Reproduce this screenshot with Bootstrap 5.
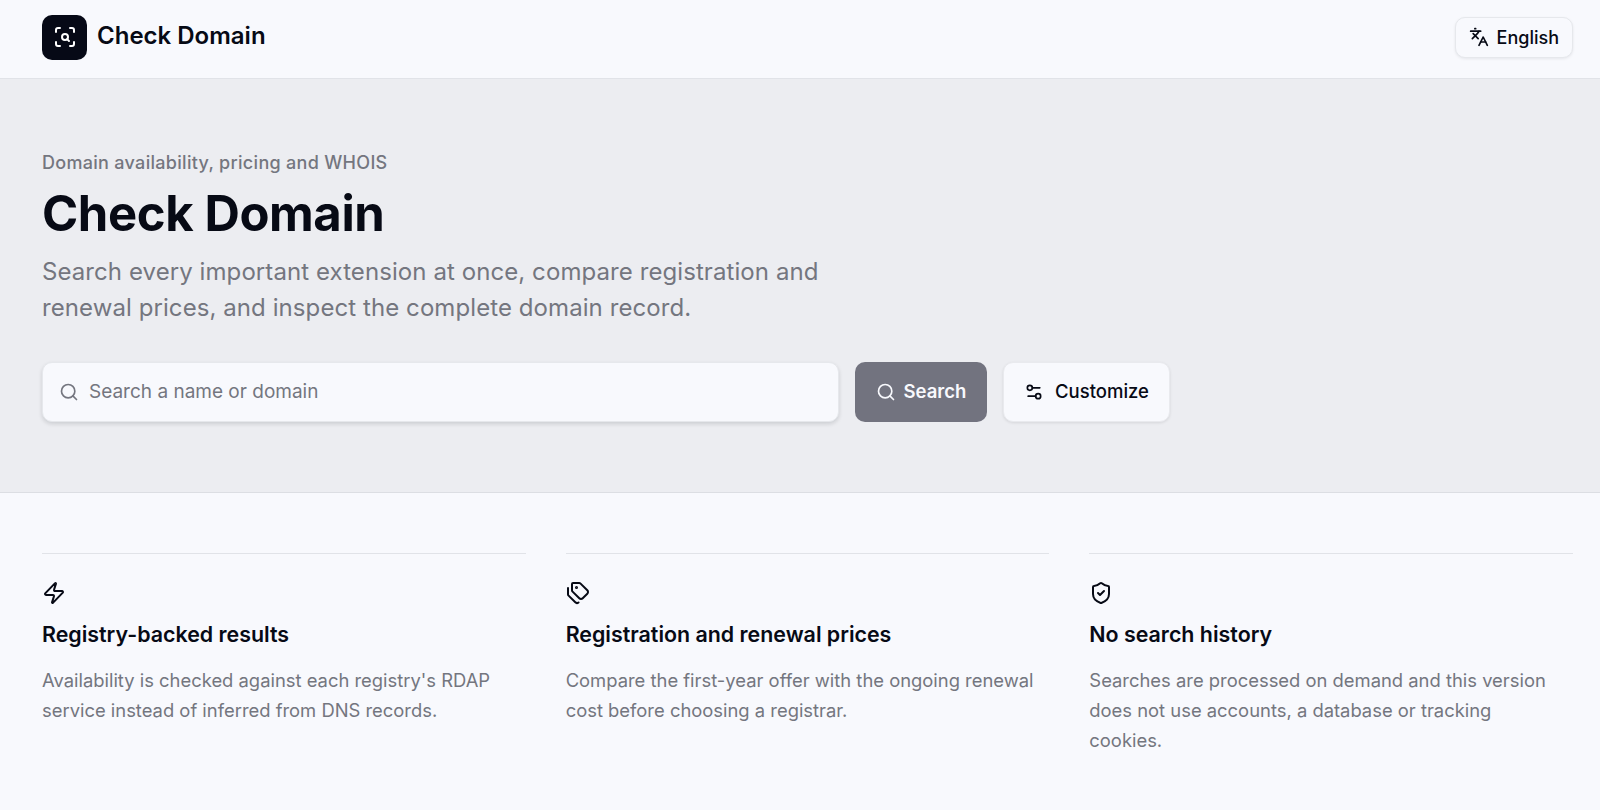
<!DOCTYPE html>
<html lang="en">

<head>
  <meta charset="UTF-8" />
  <title>Check Domain</title>
  <meta name="viewport" content="width=device-width, initial-scale=1.0" />
  <link href="https://cdn.jsdelivr.net/npm/bootstrap@5.3.0/dist/css/bootstrap.min.css" rel="stylesheet" />
  <style>
    body { background: #f8f9fd; color: #070a15; font-family: "Inter", "Liberation Sans", sans-serif; }
    svg.ico { fill: none; stroke: currentColor; stroke-width: 2; stroke-linecap: round; stroke-linejoin: round; flex-shrink: 0; }
    .top-bar { height: 79px; padding: 0 27px 4px 42px; border-bottom: 1px solid #e1e3e8; }
    .logo-box { width: 45px; height: 45px; border-radius: 10px; background: #060916; color: #fff; }
    .brand-name { font-size: 24px; font-weight: 600; margin: 0 0 2px 2px; }
    .lang-btn { height: 41px; padding: 0 13px; font-size: 18px; font-weight: 500; color: #070a15; background: #f8f9fd; border: 1px solid #e6e8ec; border-radius: 10px; box-shadow: 0 1px 3px rgba(10, 12, 23, .08); }
    .hero { height: 414px; padding: 74px 42px 0; background: #ecedf1; border-bottom: 1px solid #dcdee3; }
    .eyebrow { font-size: 18px; font-weight: 500; letter-spacing: .3px; color: #74767f; line-height: 20px; margin-bottom: 12px; }
    .hero-title { font-size: 49px; font-weight: 700; line-height: 58px; letter-spacing: -.4px; margin-bottom: 11px; }
    .hero-sub { font-size: 24px; letter-spacing: .08px; line-height: 36px; color: #74767f; width: 820px; margin-bottom: 36px; }
    .search-box { width: 797px; height: 60px; padding: 0 16px; background: #f8f9fd; border: 1px solid #e6e8ec; border-radius: 10px; box-shadow: 0 2px 4px rgba(10, 12, 23, .14); color: #74767f; }
    .search-box input { border: 0; outline: 0; background: transparent; flex-grow: 1; font-size: 19px; color: #070a15; }
    .search-box input::placeholder { color: #74767f; opacity: 1; }
    .act-btn { height: 60px; border-radius: 10px; font-size: 18.5px; font-weight: 500; }
    .act-search { width: 132px; background: #72737f; color: #f8f9fd; font-weight: 600; border: 0; }
    .act-custom { width: 167px; background: #f8f9fd; color: #070a15; border: 1px solid #e9eaee; box-shadow: 0 1px 3px rgba(10, 12, 23, .1); gap: 11px; }
    .feature-wrap { padding: 60px 27px 0 42px; column-gap: 40px; }
    .feature { border-top: 1px solid #e1e3e8; padding-top: 27px; }
    .feature-title { font-size: 21.4px; font-weight: 600; line-height: 28px; margin: 15px 0 17px; }
    .feature-text { font-size: 18.4px; line-height: 30px; color: #74767f; margin: 0; }
  </style>
</head>

<body>
  <header class="top-bar d-flex align-items-center justify-content-between">
    <div class="d-flex align-items-center gap-2">
      <span class="logo-box d-flex align-items-center justify-content-center">
        <svg class="ico" width="24" height="24" viewBox="0 0 24 24">
          <path d="M3 7V5a2 2 0 0 1 2-2h2" /><path d="M17 3h2a2 2 0 0 1 2 2v2" /><path d="M21 17v2a2 2 0 0 1-2 2h-2" /><path d="M7 21H5a2 2 0 0 1-2-2v-2" /><circle cx="12" cy="12" r="3" /><path d="m16 16-1.9-1.9" />
        </svg>
      </span>
      <span class="brand-name">Check Domain</span>
    </div>
    <button type="button" class="lang-btn d-flex align-items-center gap-2">
      <svg class="ico" width="20" height="20" viewBox="0 0 24 24">
        <path d="m5 8 6 6" /><path d="m4 14 6-6 2-3" /><path d="M2 5h12" /><path d="M7 2h1" /><path d="m22 22-5-10-5 10" /><path d="M14 18h6" />
      </svg>
      English
    </button>
  </header>

  <section class="hero">
    <div class="eyebrow">Domain availability, pricing and WHOIS</div>
    <h1 class="hero-title">Check Domain</h1>
    <p class="hero-sub">Search every important extension at once, compare registration and<br />renewal prices, and inspect the complete domain record.</p>
    <div class="d-flex gap-3">
      <label class="search-box d-flex align-items-center gap-2 mb-0">
        <svg class="ico" width="20" height="20" viewBox="0 0 24 24"><path d="m21 21-4.34-4.34" /><circle cx="11" cy="11" r="8" /></svg>
        <input type="text" placeholder="Search a name or domain" />
      </label>
      <button type="button" class="act-btn act-search d-flex align-items-center justify-content-center gap-2">
        <svg class="ico" width="20" height="20" viewBox="0 0 24 24"><path d="m21 21-4.34-4.34" /><circle cx="11" cy="11" r="8" /></svg>
        Search
      </button>
      <button type="button" class="act-btn act-custom d-flex align-items-center justify-content-center">
        <svg class="ico" width="20" height="20" viewBox="0 0 24 24"><path d="M14 17H5" /><path d="M19 7h-9" /><circle cx="17" cy="17" r="3" /><circle cx="7" cy="7" r="3" /></svg>
        Customize
      </button>
    </div>
  </section>

  <section class="feature-wrap d-grid" style="grid-template-columns: repeat(3, 1fr);">
    <div class="feature">
      <svg class="ico d-block" width="24" height="24" viewBox="0 0 24 24"><path d="M4 14a1 1 0 0 1-.78-1.63l9.9-10.2a.5.5 0 0 1 .86.46l-1.92 6.02A1 1 0 0 0 13 10h7a1 1 0 0 1 .78 1.63l-9.9 10.2a.5.5 0 0 1-.86-.46l1.92-6.02A1 1 0 0 0 11 14z" /></svg>
      <h2 class="feature-title">Registry-backed results</h2>
      <p class="feature-text">Availability is checked against each registry's RDAP<br />service instead of inferred from DNS records.</p>
    </div>
    <div class="feature">
      <svg class="ico d-block" width="24" height="24" viewBox="0 0 24 24"><path d="M13.172 2a2 2 0 0 1 1.414.586l6.71 6.71a2.4 2.4 0 0 1 0 3.408l-4.592 4.592a2.4 2.4 0 0 1-3.408 0l-6.71-6.71A2 2 0 0 1 6 9.172V3a1 1 0 0 1 1-1z" /><path d="M2 7v6.172a2 2 0 0 0 .586 1.414l6.71 6.71a2.4 2.4 0 0 0 3.18.177" /><circle cx="10.5" cy="6.5" r=".5" fill="currentColor" /></svg>
      <h2 class="feature-title">Registration and renewal prices</h2>
      <p class="feature-text">Compare the first-year offer with the ongoing renewal<br />cost before choosing a registrar.</p>
    </div>
    <div class="feature">
      <svg class="ico d-block" width="24" height="24" viewBox="0 0 24 24"><path d="M20 13c0 5-3.5 7.5-7.66 8.95a1 1 0 0 1-.67-.01C7.5 20.5 4 18 4 13V6a1 1 0 0 1 1-1c2 0 4.5-1.2 6.24-2.72a1.17 1.17 0 0 1 1.52 0C14.51 3.81 17 5 19 5a1 1 0 0 1 1 1z" /><path d="m9 12 2 2 4-4" /></svg>
      <h2 class="feature-title">No search history</h2>
      <p class="feature-text">Searches are processed on demand and this version<br />does not use accounts, a database or tracking<br />cookies.</p>
    </div>
  </section>

  <script src="https://cdn.jsdelivr.net/npm/bootstrap@5.3.0/dist/js/bootstrap.bundle.min.js"></script>
</body>

</html>
